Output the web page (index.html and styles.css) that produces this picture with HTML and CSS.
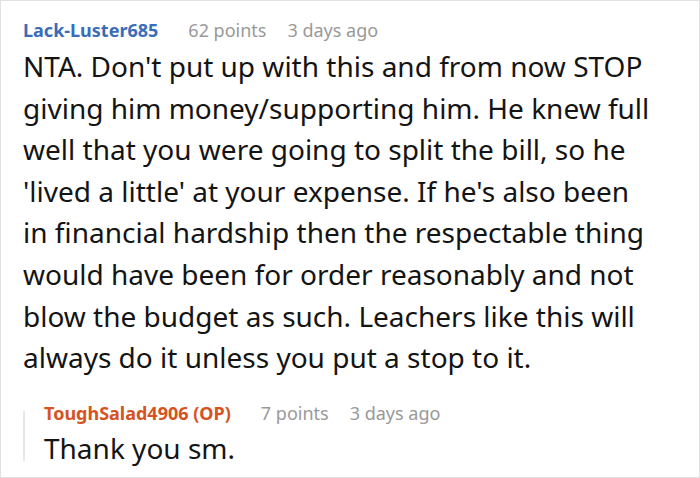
FILE: index.html
```html
<!DOCTYPE html>
<html lang="en">
<head>
    <meta charset="UTF-8">
    <meta name="viewport" content="width=device-width, initial-scale=1.0">
    <title>Comment</title>
    <link rel="stylesheet" href="styles.css">
</head>
<body>
    <div class="thread">
        <div class="comment">
            <div class="meta">
                <span class="author">Lack-Luster685</span>
                <span class="points">62 points</span>
                <span class="time">3 days ago</span>
            </div>
            <p class="text">NTA. Don't put up with this and from now STOP giving him money/supporting him. He knew full well that you were going to split the bill, so he 'lived a little' at your expense. If he's also been in financial hardship then the respectable thing would have been for order reasonably and not blow the budget as such. Leachers like this will always do it unless you put a stop to it.</p>
        </div>

        <div class="reply">
            <div class="reply-line"></div>
            <div class="comment">
                <div class="meta">
                    <span class="author op">ToughSalad4906 (OP)</span>
                    <span class="points">7 points</span>
                    <span class="time">3 days ago</span>
                </div>
                <p class="text">Thank you sm.</p>
            </div>
        </div>
    </div>
</body>
</html>
```

FILE: styles.css
```css
body {
    margin: 0;
    font-family: 'Noto Sans', 'Open Sans', sans-serif;
    background-color: #fff;
}

.thread {
    width: 700px;
    height: 478px;
    box-sizing: border-box;
    border: 1px solid #e2e2e2;
    padding: 17px 40px 0 22px;
}

.meta {
    display: flex;
    align-items: center;
    font-size: 18px;
    line-height: 24px;
    color: #999;
}

.author {
    font-weight: bold;
    color: #3a6cb8;
    margin-right: 30px;
}

.author.op {
    color: #d6531f;
}

.points {
    margin-right: 21px;
}

.text {
    margin: 4px 0 0;
    font-size: 28px;
    line-height: 41.6px;
    color: #141414;
}

.reply {
    display: flex;
    margin-top: 22px;
}

.reply-line {
    width: 2px;
    height: 50px;
    margin-top: 10px;
    margin-right: 19px;
    background-color: #e6e6e6;
}

.reply .text {
    margin-top: 3px;
}
```
